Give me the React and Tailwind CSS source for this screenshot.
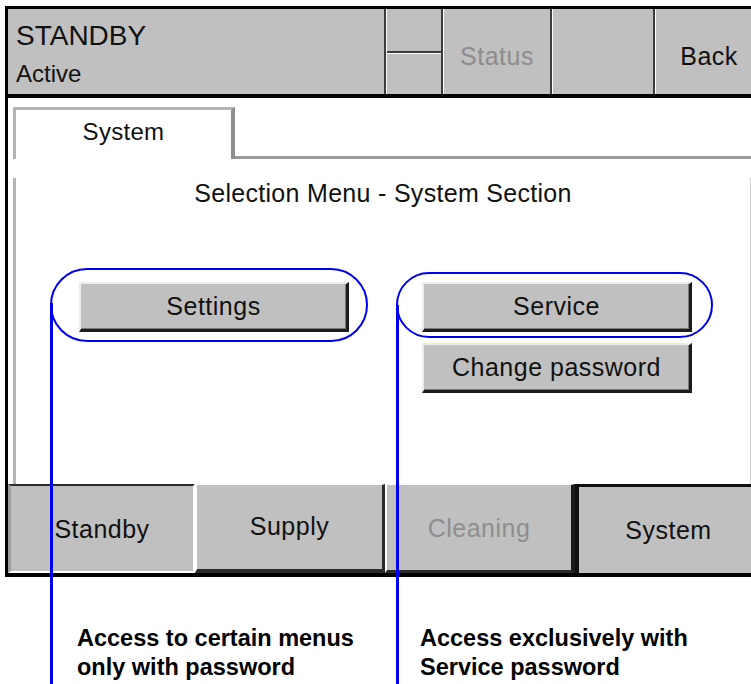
import React from 'react';

const GrayButton = ({ children }) => (
  <div className="h-[50px] w-[270px] bg-[#c0c0c0] border-t-2 border-l-2 border-t-[#ececec] border-l-[#ececec] border-r-[3px] border-b-[3px] border-r-[#1c1c1c] border-b-[#1c1c1c] shadow-[inset_-1px_-1px_0_#7a7a7a] flex items-center justify-center text-[25px] leading-none tracking-[0.5px] text-[#111]">
    {children}
  </div>
);

const TopBar = () => (
  <div className="flex h-[89px] border-b-[4px] border-black bg-[#c0c0c0]">
    <div className="w-[378px] border-r-2 border-[#3c3c3c] pl-[8px] pt-[13px] text-[#111]">
      <div className="text-[28px] leading-[28px]">STANDBY</div>
      <div className="text-[24px] leading-[24px] mt-[12px]">Active</div>
    </div>
    <div className="w-[57px] flex flex-col border-l border-white border-r-2 border-r-[#3c3c3c]">
      <div className="h-[44px] border-b-2 border-[#3c3c3c]" />
      <div className="flex-1 border-t border-white" />
    </div>
    <div className="w-[109px] border-l border-white border-r-2 border-r-[#3c3c3c] flex items-center justify-center pt-[10px] text-[25px] tracking-[0.5px] text-[#8c8c8c]">
      Status
    </div>
    <div className="w-[103px] border-l border-white border-r-2 border-r-[#3c3c3c]" />
    <div className="flex-1 border-l border-white flex items-center justify-center pt-[10px] text-[25px] tracking-[0.5px] text-[#111]">
      Back
    </div>
  </div>
);

const BottomBar = () => (
  <div className="flex h-[93px] border-b-[4px] border-black bg-[#c0c0c0] text-[25px] tracking-[0.5px]">
    <div className="w-[187px] border-t-2 border-t-[#2a2a2a] border-l-[3px] border-l-[#9c9c9c] border-b-2 border-b-white border-r-2 border-r-white flex items-center justify-center pt-[2px] text-[#111]">
      Standby
    </div>
    <div className="w-[190px] border-t border-t-white border-l-2 border-l-white border-r-[3px] border-r-[#2a2a2a] border-b-[4px] border-b-[#2a2a2a] flex items-center justify-center text-[#111]">
      Supply
    </div>
    <div className="w-[190px] border-t border-t-white border-l-2 border-l-white border-r-[4px] border-r-[#1a1a1a] border-b-[3px] border-b-[#2a2a2a] flex items-center justify-center pt-[3px] text-[#8e8e8e]">
      Cleaning
    </div>
    <div className="flex-1 border-t-[3px] border-l-[4px] border-[#111] flex items-center justify-center pt-[1px] pr-[4px] text-[#111]">
      System
    </div>
  </div>
);

export default function App() {
  return (
    <div className="relative w-[751px] h-[684px] overflow-hidden bg-white font-['Liberation_Sans',Arial,sans-serif]">
      <div className="ml-[5px] mt-[6px] w-[757px] border-l-[3px] border-t-[3px] border-black">
        <TopBar />

        {/* System section panel */}
        <div className="h-[386px] bg-white pt-[9px] pl-[5px] pb-[11px]">
          <div className="w-[738px]">
            <div className="flex h-[52px]">
              <div className="w-[222px] border-t-[3px] border-l-[3px] border-t-[#b4b4b4] border-l-[#b4b4b4] border-r-[4px] border-r-[#8e8e8e] flex items-center justify-center pb-[6px] text-[24px] tracking-[0.3px] text-[#111]">
                System
              </div>
              <div className="flex-1 border-b-[3px] border-[#9a9a9a]" />
            </div>
            <div className="h-[314px] border-l-[3px] border-l-[#b4b4b4] border-b-[3px] border-b-[#9a9a9a] border-r border-r-[#cfcfcf]">
              <div className="mt-[19px] text-center text-[25px] leading-[30px] tracking-[0.3px] text-[#111]">
                Selection Menu - System Section
              </div>
              <div className="mt-[74px] flex pl-[63px] gap-[73px]">
                <GrayButton>Settings</GrayButton>
                <div className="flex flex-col gap-[11px]">
                  <GrayButton>Service</GrayButton>
                  <GrayButton>Change password</GrayButton>
                </div>
              </div>
            </div>
          </div>
        </div>

        <BottomBar />
      </div>

      {/* annotation notes */}
      <div className="mt-[47px] flex pl-[77px] text-[23.5px] leading-[29px] font-bold text-black">
        <div className="w-[343px]">
          Access to certain menus<br />only with password
        </div>
        <div>
          Access exclusively with<br />Service password
        </div>
      </div>

      {/* blue callout marks over the screen */}
      <div className="absolute left-[50px] top-[268px] w-[318px] h-[74px] rounded-full border-[2.5px] border-[#0000f0]" />
      <div className="absolute left-[396px] top-[272px] w-[317px] h-[66px] rounded-full border-[2.5px] border-[#0000f0]" />
      <div className="absolute left-[50px] top-[303px] bottom-0 w-[3px] bg-[#0000f0]" />
      <div className="absolute left-[396px] top-[305px] bottom-0 w-[3px] bg-[#0000f0]" />
    </div>
  );
}
